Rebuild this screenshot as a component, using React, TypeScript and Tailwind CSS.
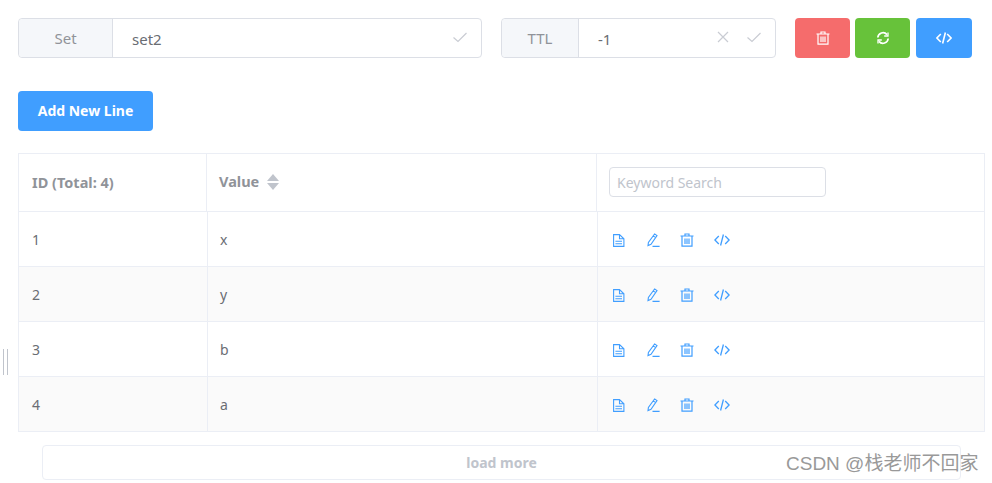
import type { ReactNode } from "react";

const font = { fontFamily: '"Noto Sans", "Open Sans", sans-serif' };

function CheckIcon() {
	return (
		<svg className="mb-[3px]" width="16" height="16" viewBox="0 0 16 16" fill="none" stroke="#c9ccd3" strokeWidth="1.2">
			<path d="M1.5 8.5 L6 12.5 L14.5 4" />
		</svg>
	);
}

function CloseIcon() {
	return (
		<svg className="mb-[3px]" width="14" height="14" viewBox="0 0 14 14" fill="none" stroke="#c9ccd3" strokeWidth="1.2">
			<path d="M2 2 L12 12 M12 2 L2 12" />
		</svg>
	);
}

function TrashIcon({ color, size = 14 }: { color: string; size?: number }) {
	return (
		<svg width={size} height={size} viewBox="0 0 14 14" fill="none" stroke={color} strokeWidth="1.2">
			<path d="M0.5 3 H13.5 M5 3 V1 H9 V3 M2 3 V13.2 H12 V3 M5 5.5 V11 M7 5.5 V11 M9 5.5 V11" />
		</svg>
	);
}

function RefreshIcon() {
	return (
		<svg width="14" height="14" viewBox="0 0 14 14" fill="none" stroke="#fff" strokeWidth="1.7">
			<path d="M1.8 6.5 A5.2 5.2 0 0 1 11 3.6 M12.2 7.5 A5.2 5.2 0 0 1 3 10.4" />
			<path d="M8.2 5 H12 V1.5 M5.8 9 H2 V12.5" strokeWidth="1.3" />
		</svg>
	);
}

function CodeIcon({ color, stroke = 1.3 }: { color: string; stroke?: number }) {
	return (
		<svg width="16" height="14" viewBox="0 0 16 14" fill="none" stroke={color} strokeWidth={stroke}>
			<path d="M4.8 3 L0.9 7 L4.8 11 M11.2 3 L15.1 7 L11.2 11 M9.4 1.5 L6.6 12.5" />
		</svg>
	);
}

function DocIcon() {
	return (
		<svg width="13" height="13" viewBox="0 0 13 13" fill="none" stroke="#409eff" strokeWidth="1.1">
			<path d="M1.6 0.6 H7.5 L11.9 4.8 V12.4 H1.6 Z M7.5 0.6 V4.8 H11.9 M3.4 7.2 H10 M3.4 9.8 H10" />
		</svg>
	);
}

function EditIcon() {
	return (
		<svg width="14" height="14" viewBox="0 0 14 14" fill="none" stroke="#409eff" strokeWidth="1.1">
			<path d="M8.6 0.9 L11 2.6 L5 11.2 L2 12.6 L2.4 9.4 Z M7.2 2.9 L9.7 4.6 M6.5 13.4 H13.6" />
		</svg>
	);
}

function SortIcon() {
	return (
		<div className="ml-2 flex flex-col gap-[2px]">
			<div className="h-0 w-0 border-x-[6.5px] border-b-[7px] border-x-transparent border-b-[#c0c4cc]" />
			<div className="h-0 w-0 border-x-[6.5px] border-t-[7px] border-x-transparent border-t-[#c0c4cc]" />
		</div>
	);
}

function InputGroup({
	label,
	labelWidth,
	value,
	className,
	children,
}: {
	label: string;
	labelWidth: string;
	value: string;
	className: string;
	children: ReactNode;
}) {
	return (
		<div className={`flex h-10 rounded border border-[#dcdfe6] ${className}`}>
			<div className={`flex items-center justify-center rounded-l border-r border-[#dcdfe6] bg-[#f5f7fa] pt-px text-[15px] text-[#909399] ${labelWidth}`}>
				{label}
			</div>
			<div className="flex flex-1 items-center pl-[19px] pr-[13px] text-[15px] text-[#6a6d73]">
				<span className="flex-1 pt-[3px]">{value}</span>
				{children}
			</div>
		</div>
	);
}

function ActionButton({ className, children }: { className: string; children: ReactNode }) {
	return <button className={`flex h-10 items-center justify-center rounded pb-px ${className}`}>{children}</button>;
}

const rows = [
	{ id: "1", value: "x" },
	{ id: "2", value: "y" },
	{ id: "3", value: "b" },
	{ id: "4", value: "a" },
];

export default function App() {
	return (
		<div className="relative h-[483px] w-[992px] overflow-hidden bg-white pl-[18px] pr-[7px] pt-[18px]" style={font}>
			<div className="absolute left-[3px] top-[349px] h-[26px] w-[5px] border-x border-[#c0c4cc]" />

			<div className="flex">
				<InputGroup label="Set" labelWidth="w-[94px]" value="set2" className="w-[464px]">
					<CheckIcon />
				</InputGroup>
				<InputGroup label="TTL" labelWidth="w-[77px]" value="-1" className="ml-[19px] w-[275px]">
					<div className="mr-4 flex items-center">
						<CloseIcon />
					</div>
					<CheckIcon />
				</InputGroup>
				<ActionButton className="ml-[19px] w-[55px] bg-[#f56c6c]">
					<TrashIcon color="#fff" />
				</ActionButton>
				<ActionButton className="ml-[5px] w-[55px] bg-[#67c23a]">
					<RefreshIcon />
				</ActionButton>
				<ActionButton className="ml-[6px] w-[56px] bg-[#409eff]">
					<CodeIcon color="#fff" stroke={1.6} />
				</ActionButton>
			</div>

			<button className="mt-[33px] block h-10 w-[135px] rounded bg-[#409eff] text-sm font-bold text-white">
				Add New Line
			</button>

			<div className="mt-[22px] border-l border-t border-[#ebeef5]">
				<div className="flex h-[58px] border-b border-[#ebeef5] text-[14.5px] font-bold text-[#909399]">
					<div className="flex w-[188px] items-center border-r border-[#ebeef5] pl-[13px]">ID (Total: 4)</div>
					<div className="flex w-[390px] items-center border-r border-[#ebeef5] pb-[2px] pl-3">
						Value
						<SortIcon />
					</div>
					<div className="flex flex-1 items-center border-r border-[#ebeef5] pb-px pl-3">
						<input
							placeholder="Keyword Search"
							className="h-[30px] w-[217px] rounded border border-[#dcdfe6] px-[7px] text-sm font-normal outline-none placeholder:text-[#c0c4cc]"
						/>
					</div>
				</div>
				{rows.map((row, i) => (
					<div
						key={row.id}
						className={`flex h-[55px] border-b border-[#ebeef5] text-sm text-[#6a6d73] ${i % 2 === 1 ? "bg-[#fafafa]" : ""}`}
					>
						<div className="flex w-[189px] items-center border-r border-[#ebeef5] pl-[13px] pt-[2px]">{row.id}</div>
						<div className="flex w-[390px] items-center border-r border-[#ebeef5] pl-3 pt-[2px]">{row.value}</div>
						<div className="flex flex-1 items-center border-r border-[#ebeef5] pl-[14px] pt-[2px]">
							<div className="flex w-[34px]"><DocIcon /></div>
							<div className="flex w-[34px]"><EditIcon /></div>
							<div className="flex w-[34px]"><TrashIcon color="#409eff" /></div>
							<CodeIcon color="#409eff" />
						</div>
					</div>
				))}
			</div>

			<div className="ml-6 mt-[13px] flex h-[35px] w-[919px] items-center justify-center rounded border border-[#ebeef5] text-sm font-bold text-[#c0c4cc]">
				load more
			</div>

			<div
				className="absolute left-[786px] top-[452px] text-[19px] leading-6 text-[#999999]"
				style={{ fontFamily: '"Liberation Sans", "Noto Sans CJK SC", sans-serif' }}
			>
				CSDN @栈老师不回家
			</div>
		</div>
	);
}
